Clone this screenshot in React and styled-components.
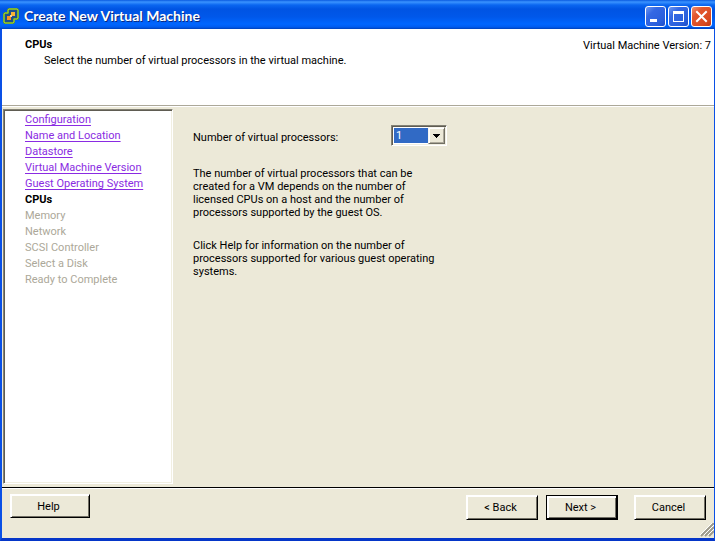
import React, { useState } from 'react';
import styled, { createGlobalStyle } from 'styled-components';

const GlobalStyle = createGlobalStyle`
  *, *::before, *::after {
    box-sizing: border-box;
  }

  body {
    margin: 0;
    background: #ece9d8;
    color: #000;
    font-family: Roboto, 'DejaVu Sans Condensed', sans-serif;
    font-size: 11px;
    line-height: 13px;
  }

  button, select {
    font: inherit;
    color: inherit;
  }
`;

const Window = styled.div`
  position: relative;
  display: flex;
  flex-direction: column;
  min-height: 100vh;
  background: #ece9d8;
  border: solid #0a50e6;
  border-width: 0 1px 3px 2px;
  border-bottom-color: #0536c8;
`;

const TitleBar = styled.header`
  display: flex;
  align-items: center;
  gap: 5px;
  height: 29px;
  margin: 0 -1px 0 -2px;
  padding: 3px 3px 0 3px;
  background: linear-gradient(
    to bottom,
    #0a5ae0 0,
    #3a93ff 2px,
    #0a66f0 5px,
    #0054e3 9px,
    #0058ea 17px,
    #0066ff 24px,
    #005cf0 27px,
    #0040b8 29px
  );
`;

const WindowTitle = styled.h1`
  flex: 1;
  margin: 0;
  color: #fff;
  font-family: Lato, sans-serif;
  font-size: 14px;
  font-weight: 700;
  line-height: 18px;
  text-shadow: 1px 1px 0 #0a2a80;
`;

const WindowControls = styled.div`
  display: flex;
  gap: 2px;
`;

const ControlButton = styled.button`
  display: flex;
  width: 21px;
  height: 21px;
  padding: 0;
  border: 1px solid #fff;
  border-radius: 3px;
  background: ${props => props.$close
    ? 'linear-gradient(135deg, #ee9070 0, #e2582f 30%, #da4a20 75%, #c03a14 100%)'
    : 'linear-gradient(135deg, #6f98f0 0, #3468e4 30%, #2a5fdc 75%, #1c4cc8 100%)'};
`;

const Banner = styled.section`
  display: flex;
  justify-content: space-between;
  height: 77px;
  padding: 9px 3px 0 23px;
  background: #fff;
  border-bottom: 1px solid #aca899;
`;

const BannerTitle = styled.h2`
  margin: 0 0 3px;
  font-size: 11px;
  font-weight: 700;
`;

const BannerText = styled.p`
  margin: 0 0 0 19px;
`;

const Version = styled.p`
  margin: 1px 0 0;
`;

const Body = styled.main`
  display: flex;
  flex: 1;
  padding: 2px 0 3px 1px;
  border-top: 1px solid #fff;
`;

const Steps = styled.nav`
  width: 170px;
  padding: 1px 0 0 20px;
  background: #fff;
  border: 1px solid;
  border-color: #848275 #fff #fff #848275;
  box-shadow: inset 1px 1px 0 #5f5c52, inset -1px -1px 0 #f1efe2;
`;

const StepList = styled.ol`
  margin: 0;
  padding: 1px;
  list-style: none;
`;

const Step = styled.li`
  height: 16px;
  line-height: 16px;
  font-weight: ${props => (props.$current ? 700 : 400)};
  color: ${props => (props.$pending ? '#aca899' : '#000')};
`;

const StepLink = styled.a`
  color: #8a2be2;
  text-decoration: underline;
  text-decoration-skip-ink: none;
  text-underline-offset: 2px;
`;

const Content = styled.section`
  flex: 1;
  padding: 16px 20px 0;
`;

const Field = styled.div`
  display: grid;
  grid-template-columns: 198px 56px;
  align-items: center;
  margin-bottom: 21px;
`;

const FieldLabel = styled.label`
  padding-top: 3px;
`;

const SelectFrame = styled.div`
  display: grid;
  grid-template-columns: 1fr 17px;
  height: 21px;
  padding: 1px;
  background: #fff;
  border: 1px solid;
  border-color: #848275 #fff #fff #848275;
  box-shadow: inset 1px 1px 0 #5f5c52, inset -1px -1px 0 #f1efe2;
`;

const Select = styled.select`
  grid-area: 1 / 1 / 2 / 3;
  appearance: none;
  margin: 1px;
  padding: 0 0 0 2px;
  border: 0;
  border-radius: 0;
  outline: 0;
  background: #316ac5;
  color: #fff;
`;

const SelectArrow = styled.span`
  grid-area: 1 / 2 / 2 / 3;
  display: flex;
  align-items: center;
  justify-content: center;
  background: #ece9d8;
  border: 1px solid;
  border-color: #f8f6ee #716f64 #716f64 #f8f6ee;
  box-shadow: inset 1px 1px 0 #fff, inset -1px -1px 0 #aca899;
  pointer-events: none;
`;

const Note = styled.p`
  margin: 0 0 20px;
`;

const Footer = styled.footer`
  display: flex;
  align-items: flex-start;
  height: 51px;
  padding: 6px 0 0 8px;
  border-top: 1px solid #000;
  box-shadow: inset 0 1px 0 #fff;
`;

const FooterActions = styled.div`
  display: flex;
  flex: 1;
  align-items: flex-end;
  justify-content: flex-end;
  padding-top: 1px;
`;

const Button = styled.button`
  width: ${props => (props.$wide ? 80 : 72)}px;
  height: ${props => (props.$wide ? 24 : 25)}px;
  margin-right: ${props => props.$gap || 0}px;
  padding: 0 3px 0 0;
  background: #ece9d8;
  border: 1px solid;
  border-color: ${props => (props.$primary ? '#000' : '#fff #000 #000 #fff')};
  box-shadow: ${props => (props.$primary
    ? 'inset -1px -1px 0 #000, inset 2px 2px 0 #fff, inset -2px -2px 0 #716f64'
    : 'inset 1px 1px 0 #fff, inset -1px -1px 0 #716f64')};
`;

const Grip = styled.svg`
  position: absolute;
  right: 0;
  bottom: 1px;
`;

const steps = [
  { name: 'Configuration', state: 'done' },
  { name: 'Name and Location', state: 'done' },
  { name: 'Datastore', state: 'done' },
  { name: 'Virtual Machine Version', state: 'done' },
  { name: 'Guest Operating System', state: 'done' },
  { name: 'CPUs', state: 'current' },
  { name: 'Memory', state: 'pending' },
  { name: 'Network', state: 'pending' },
  { name: 'SCSI Controller', state: 'pending' },
  { name: 'Select a Disk', state: 'pending' },
  { name: 'Ready to Complete', state: 'pending' }
];

// Two interlocked green frames with an orange step between them
function AppIcon() {
  return (
    <svg width="16" height="16" viewBox="0 0 16 16" aria-hidden="true">
      <path d="M6 1h8l1 1v8l-1 1h-3v3l-1 1H2l-1-1V6l1-1h3V2z" fill="#1d4f8c" stroke="#5f9a28" strokeWidth="2" strokeLinejoin="round" />
      <path d="M6 1h8l1 1v8l-1 1h-3v3l-1 1H2l-1-1V6l1-1h3V2z" fill="none" stroke="#9ccc3c" strokeWidth="1" strokeLinejoin="round" />
      <path d="M8 4h4v4H8z" fill="#f9b233" />
      <path d="M4 8h4v4H4z" fill="#f6921e" />
      <path d="M7 7h2v2H7z" fill="#fbd08a" />
    </svg>
  );
}

function App() {
  const [cpus, setCpus] = useState('1');

  return (
    <>
      <GlobalStyle />
      <Window>
        <TitleBar>
          <AppIcon />
          <WindowTitle>Create New Virtual Machine</WindowTitle>
          <WindowControls>
            <ControlButton type="button" aria-label="Minimize">
              <svg width="19" height="19" viewBox="0 0 19 19">
                <path d="M4 12h7v3H4z" fill="#fff" />
              </svg>
            </ControlButton>
            <ControlButton type="button" aria-label="Maximize">
              <svg width="19" height="19" viewBox="0 0 19 19">
                <path d="M4 4h11v11H4zM5 7v7h9V7z" fill="#fff" fillRule="evenodd" />
              </svg>
            </ControlButton>
            <ControlButton type="button" aria-label="Close" $close>
              <svg width="19" height="19" viewBox="0 0 19 19">
                <path d="M5 5l9 9M14 5l-9 9" stroke="#fff" strokeWidth="2" strokeLinecap="square" />
              </svg>
            </ControlButton>
          </WindowControls>
        </TitleBar>

        <Banner>
          <div>
            <BannerTitle>CPUs</BannerTitle>
            <BannerText>Select the number of virtual processors in the virtual machine.</BannerText>
          </div>
          <Version>Virtual Machine Version: 7</Version>
        </Banner>

        <Body>
          <Steps>
            <StepList>
              {steps.map(step => (
                <Step
                  key={step.name}
                  $current={step.state === 'current'}
                  $pending={step.state === 'pending'}
                >
                  {step.state === 'done' ? <StepLink href="#">{step.name}</StepLink> : step.name}
                </Step>
              ))}
            </StepList>
          </Steps>

          <Content>
            <Field>
              <FieldLabel htmlFor="cpus">Number of virtual processors:</FieldLabel>
              <SelectFrame>
                <Select id="cpus" value={cpus} onChange={e => setCpus(e.target.value)}>
                  <option>1</option>
                  <option>2</option>
                  <option>4</option>
                  <option>8</option>
                </Select>
                <SelectArrow>
                  <svg width="7" height="4" viewBox="0 0 7 4" shapeRendering="crispEdges">
                    <path d="M0 0h7v1H6v1H5v1H4v1H3V3H2V2H1V1H0z" />
                  </svg>
                </SelectArrow>
              </SelectFrame>
            </Field>
            <Note>
              The number of virtual processors that can be<br />
              created for a VM depends on the number of<br />
              licensed CPUs on a host and the number of<br />
              processors supported by the guest OS.
            </Note>
            <Note>
              Click Help for information on the number of<br />
              processors supported for various guest operating<br />
              systems.
            </Note>
          </Content>
        </Body>

        <Footer>
          <Button type="button" $wide>Help</Button>
          <FooterActions>
            <Button type="button" $gap={8}>&lt; Back</Button>
            <Button type="button" $primary $gap={16}>Next &gt;</Button>
            <Button type="button" $gap={8}>Cancel</Button>
          </FooterActions>
        </Footer>
        <Grip width="14" height="14" viewBox="0 0 14 14" aria-hidden="true">
          <path d="M1 13L14 0M5 13L14 4M9 13L14 8" stroke="#9d9a8b" strokeWidth="2" />
          <path d="M0 12L12 0M4 12L14 2M8 12L14 6" stroke="#fff" strokeWidth="1" />
        </Grip>
      </Window>
    </>
  );
}

export default App;
